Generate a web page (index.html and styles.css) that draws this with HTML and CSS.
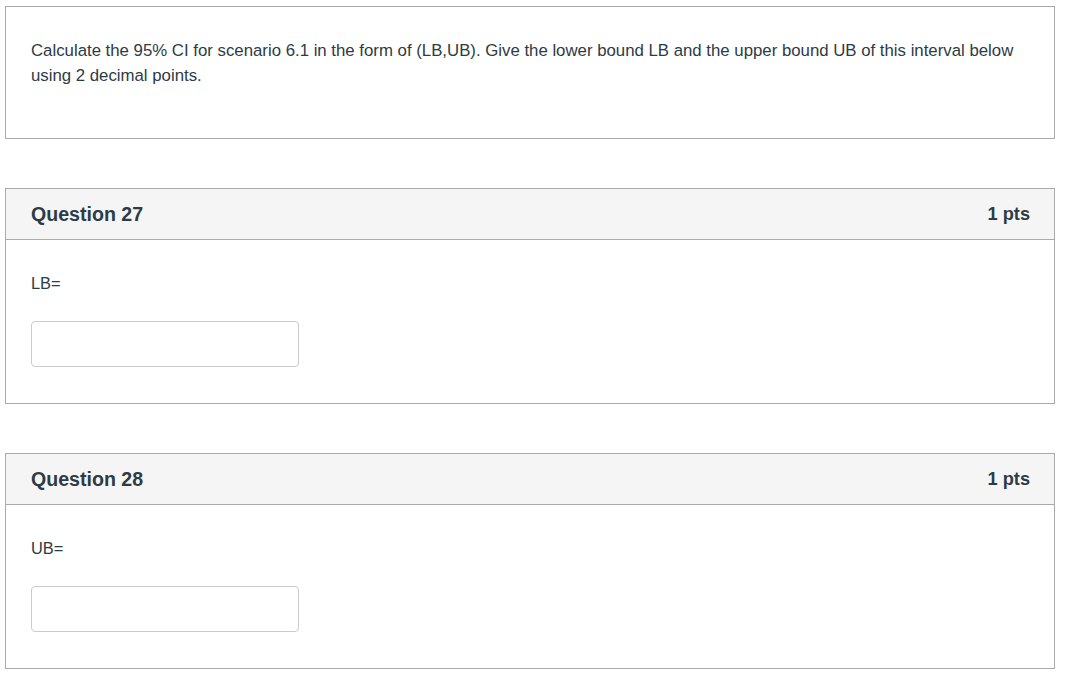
FILE: index.html
```html
<!DOCTYPE html>
<html>
<head>
<meta charset="utf-8">
<link rel="stylesheet" href="styles.css">
</head>
<body>
<div class="page">
  <div class="box text-box">
    <p class="qtext">Calculate the 95% CI for scenario 6.1 in the form of (LB,UB). Give the lower bound LB and the upper bound UB of this interval below using 2 decimal points.</p>
  </div>

  <div class="box question">
    <div class="q-header">
      <span class="q-name">Question 27</span>
      <span class="q-pts">1 pts</span>
    </div>
    <div class="q-body">
      <p class="q-label">LB=</p>
      <input class="answer" type="text">
    </div>
  </div>

  <div class="box question">
    <div class="q-header">
      <span class="q-name">Question 28</span>
      <span class="q-pts">1 pts</span>
    </div>
    <div class="q-body">
      <p class="q-label">UB=</p>
      <input class="answer" type="text">
    </div>
  </div>
</div>
</body>
</html>
```

FILE: styles.css
```css
html, body {
  margin: 0;
  padding: 0;
  background: #fff;
}

body {
  font-family: "Liberation Sans", Arial, sans-serif;
  color: #2d3b45;
  font-size: 16px;
}

.page {
  padding: 6px 14px 0 5px;
  display: flex;
  flex-direction: column;
  gap: 49px;
}

.box {
  border: 1px solid #aaaaaa;
  background: #fff;
}

.text-box {
  height: 131px;
  box-sizing: content-box;
  padding: 0 25px;
}

.qtext {
  margin: 0;
  padding-top: 31px;
  line-height: 25px;
  font-size: 16.8px;
}

.q-header {
  height: 50px;
  background: #f5f5f5;
  border-bottom: 1px solid #aaaaaa;
  display: flex;
  align-items: center;
  justify-content: space-between;
  padding: 0 24px 0 25px;
  font-weight: bold;
  color: #2d3b45;
}

.q-name {
  font-size: 19.6px;
}

.q-pts {
  font-size: 18.2px;
}

.q-body {
  padding: 31px 25px 36px 25px;
}

.q-label {
  margin: 0 0 25px 0;
  line-height: 25px;
  height: 25px;
  font-size: 16.4px;
}

.answer {
  display: block;
  box-sizing: border-box;
  width: 268px;
  height: 46px;
  border: 1px solid #cccccc;
  border-radius: 4px;
  background: #fff;
  margin: 0;
  padding: 4px 6px;
  font-family: inherit;
  font-size: 16px;
}
```
